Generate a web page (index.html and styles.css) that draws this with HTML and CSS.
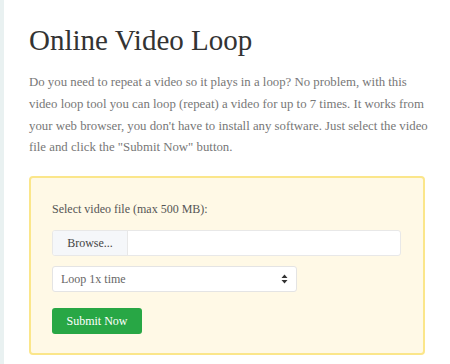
FILE: index.html
```html
<!DOCTYPE html>
<html>
<head>
<meta charset="utf-8">
<link rel="stylesheet" href="styles.css">
</head>
<body>
<div class="page">
  <h1 class="title">Online Video Loop</h1>
  <p class="intro">Do you need to repeat a video so it plays in a loop? No problem, with this<br>video loop tool you can loop (repeat) a video for up to 7 times. It works from<br>your web browser, you don't have to install any software. Just select the video<br>file and click the "Submit Now" button.</p>
  <div class="panel">
    <div class="label">Select video file (max 500 MB):</div>
    <div class="file">
      <span class="browse">Browse...</span>
      <span class="file-name"></span>
    </div>
    <div class="select">
      <span>Loop 1x time</span>
      <svg class="arrows" width="7" height="10" viewBox="0 0 7 10"><path d="M3.5 0.5 L6.5 4 L0.5 4 Z M3.5 9.5 L6.5 6 L0.5 6 Z" fill="#333"/></svg>
    </div>
    <div class="actions"><span class="submit">Submit Now</span></div>
  </div>
</div>
</body>
</html>
```
FILE: styles.css
```css
html, body { margin: 0; padding: 0; }
body {
  background: #fff;
  font-family: "Liberation Serif", serif;
  width: 450px;
  height: 364px;
  overflow: hidden;
  border-left: 4px solid #e9f1f1;
  box-sizing: border-box;
}
.page {
  padding: 20px 0 0 25px;
  width: 396px;
}
.title {
  margin: 0;
  font-weight: normal;
  font-size: 29px;
  line-height: 40px;
  color: #333;
}
.intro {
  margin: 12px 0 0;
  font-size: 12.8px;
  line-height: 21.8px;
  color: #777;
  white-space: nowrap;
}
.panel {
  margin-top: 17px;
  background: #fff9e6;
  border: 2px solid #fbe68a;
  border-radius: 4px;
  padding: 22px 21px 20px;
  height: 179px;
  box-sizing: border-box;
}
.label {
  font-size: 12px;
  color: #555;
  line-height: 18px;
}
.file {
  margin-top: 12px;
  display: flex;
  width: 349px;
  height: 26px;
  border: 1px solid #e8e8e8;
  border-radius: 3px;
  background: #fff;
  box-sizing: border-box;
  overflow: hidden;
}
.browse {
  width: 74px;
  background: #f5f7fa;
  border-right: 1px solid #e8e8e8;
  font-size: 12px;
  color: #444;
  display: flex;
  align-items: center;
  justify-content: center;
}
.select {
  margin-top: 10px;
  width: 245px;
  height: 26px;
  border: 1px solid #e4e4e4;
  border-radius: 3px;
  background: #fff;
  box-sizing: border-box;
  display: flex;
  align-items: center;
  justify-content: space-between;
  padding: 0 8px 0 8px;
  font-size: 12px;
  color: #666;
}
.actions { margin-top: 16px; display: flex; }
.submit {
  background: #28a745;
  color: #fff;
  font-size: 12px;
  height: 26px;
  width: 90px;
  border-radius: 3px;
  display: flex;
  align-items: center;
  justify-content: center;
}
```
